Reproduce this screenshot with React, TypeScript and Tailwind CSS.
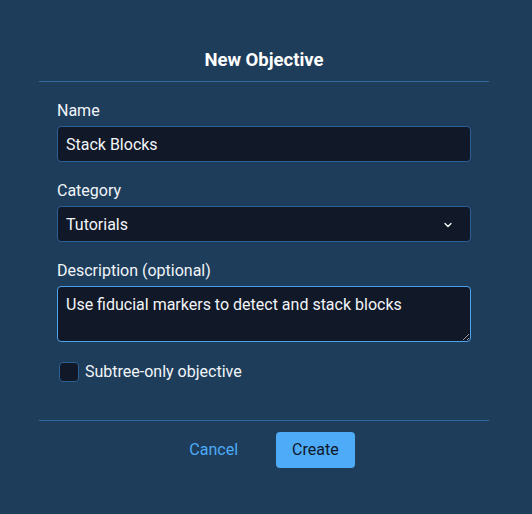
import { ChevronDown } from "lucide-react";

export default function App() {
  return (
    <div className="min-h-screen w-[532px] h-[514px] bg-[#1e3d5a] text-[#f1f5f9] font-['Roboto',sans-serif] flex flex-col items-start">
      <div className="ml-[39px] w-[450px] flex flex-col">
        <div className="h-[82px] flex items-end justify-center pb-[9px] border-b border-[#2f6aa3]">
          <h2 className="text-[18.5px] font-bold leading-6 text-white">New Objective</h2>
        </div>

        <div className="px-[18px] pt-[18px] flex flex-col gap-[18px]">
          <div className="flex flex-col gap-[4px]">
            <label className="text-base leading-[22px]">Name</label>
            <input
              defaultValue="Stack Blocks"
              className="h-9 w-full rounded border border-[#2a5f93] bg-[#111827] px-2 pt-[1px] text-base text-[#f1f5f9] outline-none"
            />
          </div>

          <div className="flex flex-col gap-[4px]">
            <label className="text-base leading-[22px]">Category</label>
            <div className="h-9 w-full rounded border border-[#2a5f93] bg-[#111827] pl-2 pr-4 pt-[1px] flex items-center justify-between text-base">
              <span>Tutorials</span>
              <ChevronDown className="w-3 h-3 text-white" strokeWidth={2.5} />
            </div>
          </div>

          <div className="flex flex-col gap-[4px]">
            <label className="text-base leading-[22px]">Description (optional)</label>
            <textarea
              defaultValue="Use fiducial markers to detect and stack blocks"
              className="h-14 w-full rounded border border-[#4aa3ef] bg-[#111827] px-2 pt-[8px] pb-[6px] text-base leading-5 text-[#f1f5f9] outline-none resize-y"
            />
          </div>

          <label className="flex items-center gap-[6px] pl-[2px] mt-[2px]">
            <span className="w-5 h-5 rounded-sm border border-[#2a5f93] bg-[#111827]" />
            <span className="text-base leading-5">Subtree-only objective</span>
          </label>
        </div>

        <div className="mt-[38px] border-t border-[#2f6aa3] pt-[11px] flex justify-center gap-[22px]">
          <button className="h-9 px-4 rounded text-base text-[#4dabf7]">Cancel</button>
          <button className="h-9 px-4 rounded bg-[#4dabf7] text-base text-[#0f172a]">Create</button>
        </div>
      </div>
    </div>
  );
}
